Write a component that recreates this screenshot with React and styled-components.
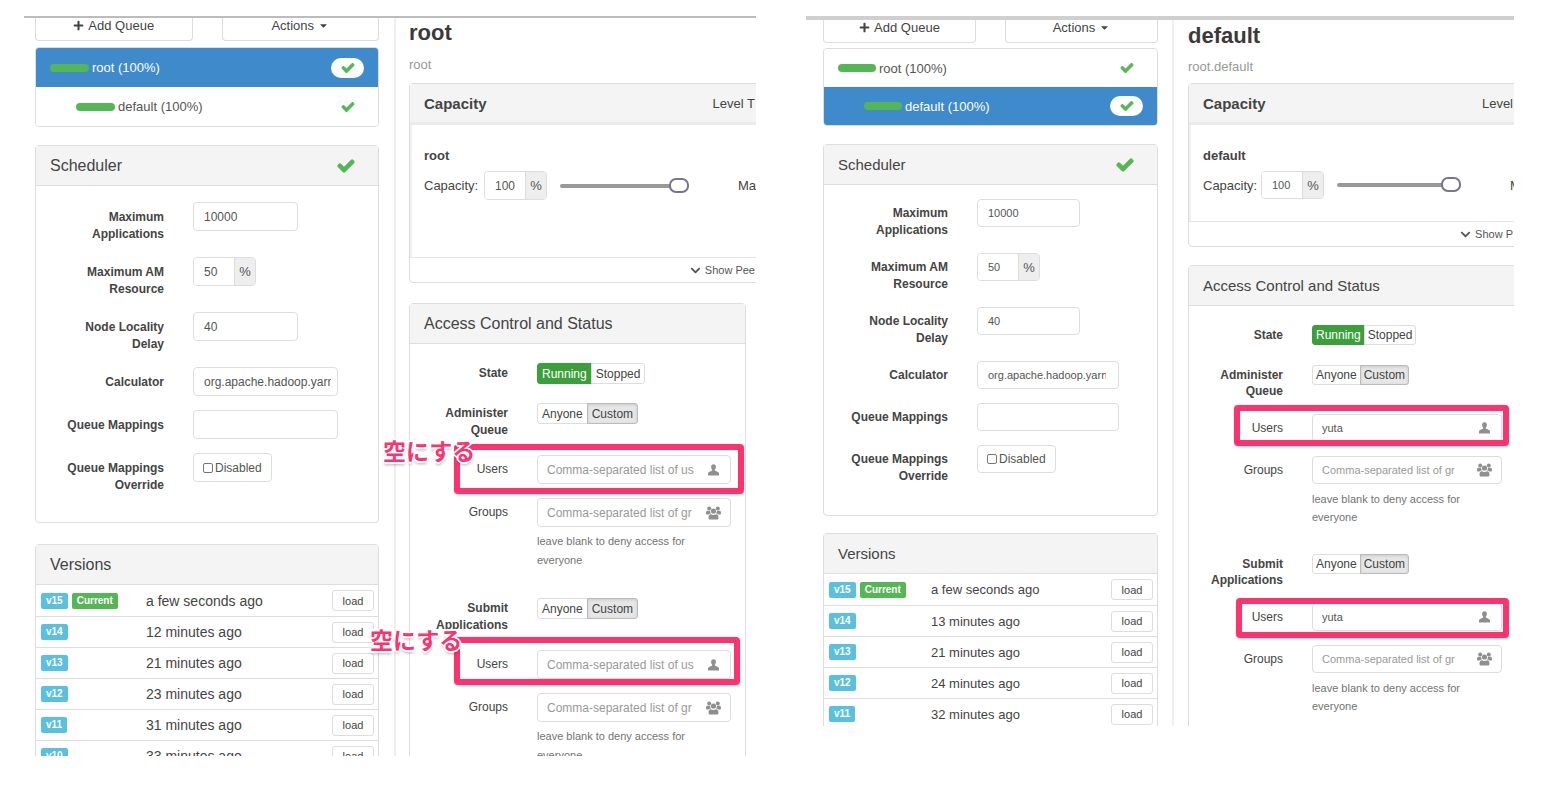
import React, { useId } from "react";
import styled, { ThemeProvider, createGlobalStyle, css } from "styled-components";
import { FaCheck, FaPlus, FaChevronDown, FaCaretDown } from "react-icons/fa";

const GlobalStyle = createGlobalStyle`
  *, *::before, *::after { box-sizing: border-box; }
  body {
    margin: 0;
    background: #fff;
    color: #444;
    font-family: "Liberation Sans", Arial, sans-serif;
    font-size: 13px;
  }
  button, input { font: inherit; color: inherit; margin: 0; }
`;

const color = {
  line: "#ddd",
  head: "#f4f4f4",
  blue: "#3f8acb",
  green: "#55b655",
  running: "#3b9f3b",
  info: "#5bc0de",
  pink: "#fb336f",
};

const roomy = {
  bar: 2, barColor: "#bcbcbc", cutoff: 68,
  columns: "minmax(0, 31fr) minmax(0, 30fr)",
  sideLeft: 11, sideRight: 15, mainLeft: 13,
  treeGap: 6, treeRow: 39, sectionGap: 18, swatch: 39,
  panelFont: 16, bodyTop: 16, formBottom: 28, field: 29,
  inputFont: 12, labelCol: 128, labelPad: 7, shortField: 105, longField: 145, longPad: 6,
  versionFont: 14, badgeCol: 110, versionsGap: 21,
  titleTop: 1, subTop: 9, subBottom: 9,
  capLabel: 60, capBottom: 57, sliderWidth: 129, accessGap: 20,
  accessMargin: 10, accessLabel: 98, accessLine: 17, accessPad: 2, helpLine: 19, helpTop: 5,
  toggle: 21, togglePad: 4,
};

const tight = {
  bar: 4, barColor: "#cfcfcf", cutoff: 98,
  columns: "minmax(0, 92fr) minmax(0, 85fr)",
  sideLeft: 17, sideRight: 14, mainLeft: 14,
  treeGap: 5, treeRow: 38, sectionGap: 18, swatch: 38,
  panelFont: 15, bodyTop: 14, formBottom: 30, field: 28,
  inputFont: 11, labelCol: 124, labelPad: 6, shortField: 103, longField: 142, longPad: 12,
  versionFont: 13, badgeCol: 107, versionsGap: 17,
  titleTop: 2, subTop: 8, subBottom: 7,
  capLabel: 58, capBottom: 22, sliderWidth: 124, accessGap: 18,
  accessMargin: -3, accessLabel: 94, accessLine: 16, accessPad: 1, helpLine: 18, helpTop: 6,
  toggle: 20, togglePad: 3,
};

const t = (key) => ({ theme }) => `${theme[key]}px`;

/* ---------- page frame ---------- */

const Page = styled.main`
  display: grid;
  grid-template-columns: minmax(0, 61fr) minmax(0, 59fr);
  column-gap: 50px;
  align-items: start;
  min-height: 100vh;
  padding: 16px 48px 0 24px;
`;

const Frame = styled.section`
  display: grid;
  grid-template-columns: ${({ theme }) => theme.columns};
  height: calc(100vh - ${t("cutoff")});
  overflow: hidden;
  border-top: ${t("bar")} solid ${({ theme }) => theme.barColor};
`;

const Sidebar = styled.aside`
  padding: 0 ${t("sideRight")} 0 ${t("sideLeft")};
  border-right: 2px solid #efefef;
`;

const Main = styled.div`
  padding-left: ${t("mainLeft")};
`;

/* ---------- shared panel ---------- */

const Panel = styled.section`
  border: 1px solid ${color.line};
  border-radius: 4px;
  background: #fff;
`;

const PanelHead = styled.header`
  display: flex;
  align-items: center;
  justify-content: space-between;
  height: 40px;
  padding: 0 24px 0 14px;
  border-bottom: 1px solid ${color.line};
  background: ${color.head};
`;

const PanelTitle = styled.h2`
  margin: 0;
  font-size: ${t("panelFont")};
  font-weight: 400;
`;

const CheckMark = styled(FaCheck)`
  color: ${color.green};
  font-size: ${({ $large }) => ($large ? 16 : 12)}px;
  stroke: currentColor;
  stroke-width: 44px;
  overflow: visible;
`;

/* ---------- queue tree ---------- */

const Actions = styled.div`
  display: grid;
  grid-template-columns: 1fr 1fr;
  column-gap: 29px;
`;

const ActionButton = styled.button`
  display: flex;
  align-items: center;
  justify-content: center;
  gap: 4px;
  height: 23px;
  padding: 0 0 7px;
  border: 1px solid ${color.line};
  border-top: 0;
  border-radius: 0 0 4px 4px;
  background: #fff;
  font-size: 13px;

  svg { font-size: 11px; }
`;

const Tree = styled.nav`
  display: flex;
  flex-direction: column;
  margin: ${t("treeGap")} 0 ${t("sectionGap")};
  border: 1px solid ${color.line};
  border-radius: 4px;
  overflow: hidden;
`;

const TreeLink = styled.a`
  display: flex;
  align-items: center;
  gap: 3px;
  height: ${t("treeRow")};
  padding: 0 14px 0 ${({ $depth }) => 14 + $depth * 26}px;
  background: ${({ $active }) => ($active ? color.blue : "#fff")};
  color: ${({ $active }) => ($active ? "#fff" : "#555")};
  font-size: 13px;
  text-decoration: none;
`;

const Swatch = styled.span`
  width: ${t("swatch")};
  height: 8px;
  border-radius: 4px;
  background: ${color.green};
`;

const Pill = styled.span`
  display: flex;
  align-items: center;
  justify-content: center;
  width: 33px;
  height: 20px;
  margin-left: auto;
  border-radius: 10px;
  background: #fff;
`;

/* ---------- scheduler form ---------- */

const SchedulerForm = styled.form`
  display: grid;
  row-gap: 14px;
  padding: ${t("bodyTop")} 0 ${t("formBottom")};
`;

const FormRow = styled.div`
  display: grid;
  grid-template-columns: ${t("labelCol")} minmax(0, 1fr);
  column-gap: 29px;
  align-items: start;
`;

const FormLabel = styled.label`
  padding: ${t("labelPad")} 0 0 24px;
  font-size: 12px;
  font-weight: 700;
  line-height: 17px;
  text-align: right;
  ${({ $single }) => $single && css`
    height: ${t("field")};
  `}
`;

const fieldBox = css`
  height: ${t("field")};
  border: 1px solid ${color.line};
  border-radius: 4px;
  background: #fff;
  color: #555;
`;

const TextField = styled.input`
  ${fieldBox}
  width: ${({ $long }) => ($long ? t("longField") : t("shortField"))};
  padding: 0 ${t("longPad")} 0 10px;
  font-size: ${t("inputFont")};
`;

const PercentBox = styled.span`
  ${fieldBox}
  display: flex;
  width: 63px;
  overflow: hidden;
`;

const PercentInput = styled.input`
  flex: 1;
  min-width: 0;
  padding: 0 0 0 10px;
  border: 0;
  background: #fff;
  font-size: ${t("inputFont")};
`;

const PercentSign = styled.span`
  display: flex;
  align-items: center;
  justify-content: center;
  width: 21px;
  border-left: 1px solid ${color.line};
  background: #eee;
`;

const CheckField = styled.label`
  ${fieldBox}
  display: flex;
  align-items: center;
  justify-self: start;
  gap: 2px;
  padding: 0 9px;
  font-size: 12px;
`;

const TickBox = styled.input`
  appearance: none;
  width: 10px;
  height: 10px;
  border: 1px solid #777;
  border-radius: 2px;
  background: #fff;
`;

/* ---------- versions ---------- */

const VersionsPanel = styled(Panel)`
  margin-top: ${t("versionsGap")};
`;

const VersionTable = styled.table`
  width: 100%;
  table-layout: fixed;
  border-collapse: separate;
  border-spacing: 0;
  font-size: ${t("versionFont")};

  td {
    height: 31px;
    padding: 0;
    white-space: nowrap;
  }
  tr + tr td { border-top: 1px solid ${color.line}; }
  td:first-child { width: ${t("badgeCol")}; padding-left: 5px; }
  td:last-child { width: 60px; padding-right: 4px; text-align: right; }
`;

const Badges = styled.div`
  display: flex;
  gap: 4px;
`;

const Badge = styled.span`
  height: 16px;
  padding: 0 5px;
  border-radius: 2px;
  background: ${({ $current }) => ($current ? color.green : color.info)};
  color: #fff;
  font-size: 10px;
  font-weight: 700;
  line-height: 16px;
`;

const LoadButton = styled.button`
  display: block;
  width: 42px;
  height: 21px;
  margin-left: auto;
  padding: 0;
  border: 1px solid ${color.line};
  border-radius: 3px;
  background: #fff;
  font-size: 11px;
`;

/* ---------- queue heading and capacity ---------- */

const QueueTitle = styled.h1`
  margin: 0;
  padding-top: ${t("titleTop")};
  color: #3a3a3a;
  font-size: 22px;
  font-weight: 700;
  line-height: 28px;
`;

const QueuePath = styled.p`
  margin: ${t("subTop")} 0 ${t("subBottom")};
  color: #999;
  font-size: 13px;
  line-height: 18px;
`;

const CapacityPanel = styled(Panel)`
  margin-right: -40px;
`;

const CapacityHead = styled(PanelHead)`
  height: 41px;
  padding-right: 40px;
  border-bottom: 3px solid #ebebeb;
  white-space: nowrap;
`;

const CapacityTitle = styled.h2`
  margin: 0;
  font-size: 15px;
  font-weight: 700;
`;

const CapacityBody = styled.div`
  padding: 22px 0 ${t("capBottom")} 12px;
  border-left: 2px solid #f0f0f0;
`;

const CapacityName = styled.h3`
  margin: 0 0 7px;
  font-size: 13px;
  line-height: 17px;
`;

const CapacityRow = styled.div`
  display: flex;
  align-items: center;
  white-space: nowrap;
`;

const CapacityLabel = styled.label`
  width: ${t("capLabel")};
`;

const Slider = styled.input`
  appearance: none;
  flex: none;
  width: ${t("sliderWidth")};
  height: 15px;
  margin: 0 49px 0 13px;
  background: transparent;

  &::-webkit-slider-runnable-track {
    height: 4px;
    border-radius: 2px;
    background: #999;
  }
  &::-webkit-slider-thumb {
    appearance: none;
    width: 20px;
    height: 15px;
    margin-top: -6px;
    border: 2px solid #77758c;
    border-radius: 7px;
    background: #fff;
  }
`;

const PeersButton = styled.button`
  display: flex;
  align-items: center;
  justify-content: flex-end;
  gap: 4px;
  width: 100%;
  height: 25px;
  padding: 0 40px 0 0;
  border: 0;
  border-top: 1px solid #e6e6e6;
  background: transparent;
  color: #555;
  font-size: 11px;
  white-space: nowrap;
`;

/* ---------- access control ---------- */

const AccessPanel = styled(Panel)`
  margin: ${t("accessGap")} ${t("accessMargin")} 0 0;
`;

const AccessForm = styled.form`
  display: grid;
  row-gap: 14px;
  padding: 19px 0;
`;

const AccessRow = styled.div`
  position: relative;
  display: grid;
  grid-template-columns: ${t("accessLabel")} minmax(0, 1fr);
  column-gap: 29px;
  align-items: start;
  min-height: 26px;
  padding-right: 14px;
`;

const ToggleLabel = styled.span`
  padding: 2px 0 ${t("accessPad")} 20px;
  font-size: 12px;
  font-weight: 700;
  line-height: ${t("accessLine")};
  text-align: right;
`;

const FieldLabel = styled.label`
  font-size: 12px;
  line-height: ${t("field")};
  text-align: right;
`;

const ToggleGroup = styled.div`
  display: flex;
`;

const Toggle = styled.button`
  height: ${t("toggle")};
  padding: 0 ${t("togglePad")};
  border: 1px solid ${color.line};
  background: #fff;
  font-size: 12px;
  line-height: 16px;

  &:first-child { border-radius: 3px 0 0 3px; }
  &:last-child { border-radius: 0 3px 3px 0; }
  & + & { margin-left: -1px; }

  ${({ $kind }) => $kind === "success" && css`
    border-color: ${color.running};
    background: ${color.running};
    color: #fff;
  `}
  ${({ $kind }) => $kind === "pressed" && css`
    border-color: #bbb;
    background: #e6e6e6;
    box-shadow: inset 0 1px 3px rgba(0, 0, 0, 0.12);
  `}
`;

const IconField = styled.span`
  ${fieldBox}
  display: flex;
  align-items: center;
  padding: 0 9px;

  svg {
    flex: none;
    fill: #8f8f8f;
  }
`;

const IconFieldInput = styled.input`
  flex: 1;
  min-width: 0;
  padding: 0;
  border: 0;
  background: transparent;
  font-size: ${t("inputFont")};

  &::placeholder { color: #999; opacity: 1; }
`;

const Help = styled.p`
  grid-column: 2;
  margin: ${t("helpTop")} 0 14px;
  padding-right: 30px;
  color: #737373;
  font-size: 11px;
  line-height: ${t("helpLine")};
`;

/* ---------- annotations laid over the panels ---------- */

const Ring = styled.div`
  position: absolute;
  inset: ${({ $inset }) => $inset};
  border: 6px solid ${color.pink};
  border-radius: 4px;
  box-shadow: 0 1px 2px rgba(0, 0, 0, 0.18);
  pointer-events: none;
`;

const Note = styled.span`
  position: absolute;
  left: ${({ $left }) => $left}px;
  top: ${({ $top }) => $top}px;
  color: ${color.pink};
  font-family: "Noto Sans CJK JP", sans-serif;
  font-size: 23px;
  font-weight: 700;
  line-height: 24px;
  white-space: nowrap;
  text-shadow: 2px 0 #fff, -2px 0 #fff, 0 2px #fff, 0 -2px #fff, 1px 1px #fff, -1px -1px #fff,
    1px -1px #fff, -1px 1px #fff, 0 3px 3px rgba(0, 0, 0, 0.3);
`;

/* ---------- composition ---------- */

function PersonIcon() {
  return (
    <svg width="15" height="12" viewBox="-2 0 15 12" aria-hidden="true">
      <path d="M5.5.3C7 .3 7.9 1.4 7.9 3c0 1.2-.5 2.1-1.1 2.7v.8l3.1 1.4c.7.3 1.1.8 1.1 1.6v1.9H0V9.500c0-.8.4-1.300 1.100-1.600l3.100-1.400v-.8C3.600 5.100 3.100 4.200 3.100 3 3.100 1.400 4 .3 5.500.3z" />
    </svg>
  );
}

function PeopleIcon() {
  return (
    <svg width="15" height="14" viewBox="0 0 15 14" aria-hidden="true">
      <circle cx="3.200" cy="2.500" r="2" />
      <circle cx="11.800" cy="2.500" r="2" />
      <circle cx="7.500" cy="5" r="2.600" />
      <path d="M1.300 4.800h2.600c.1 1.200.5 2 1.100 2.700-1 .1-1.800.5-2.400 1.100H1.300C.5 8.600 0 8.100 0 7.300c0-1.200.3-2.500 1.300-2.500z" />
      <path d="M13.700 4.800h-2.600c-.1 1.200-.5 2-1.100 2.700 1 .1 1.800.5 2.400 1.100h1.300c.8 0 1.300-.5 1.300-1.300 0-1.200-.3-2.500-1.300-2.500z" />
      <path d="M4.900 8.200c1.600 1 3.600 1 5.200 0 1.700.1 2.400 1.500 2.400 3.500 0 1.200-.7 1.900-1.900 1.900H4.400c-1.200 0-1.900-.7-1.900-1.900 0-2 .7-3.400 2.400-3.500z" />
    </svg>
  );
}

function PercentField({ id, value }) {
  return (
    <PercentBox>
      <PercentInput id={id} defaultValue={value} />
      <PercentSign>%</PercentSign>
    </PercentBox>
  );
}

function QueueTree({ selected }) {
  return (
    <Tree aria-label="Queues">
      {["root", "default"].map((name, depth) => (
        <TreeLink key={name} href={`#${name}`} $depth={depth} $active={name === selected}>
          <Swatch />
          {name} (100%)
          <Pill><CheckMark /></Pill>
        </TreeLink>
      ))}
    </Tree>
  );
}

function Scheduler() {
  const id = useId();
  return (
    <Panel>
      <PanelHead>
        <PanelTitle>Scheduler</PanelTitle>
        <CheckMark $large />
      </PanelHead>
      <SchedulerForm>
        <FormRow>
          <FormLabel htmlFor={`${id}max`}>Maximum Applications</FormLabel>
          <TextField id={`${id}max`} defaultValue="10000" />
        </FormRow>
        <FormRow>
          <FormLabel htmlFor={`${id}am`}>Maximum AM Resource</FormLabel>
          <PercentField id={`${id}am`} value="50" />
        </FormRow>
        <FormRow>
          <FormLabel htmlFor={`${id}node`}>Node Locality Delay</FormLabel>
          <TextField id={`${id}node`} defaultValue="40" />
        </FormRow>
        <FormRow>
          <FormLabel $single htmlFor={`${id}calc`}>Calculator</FormLabel>
          <TextField $long id={`${id}calc`} defaultValue="org.apache.hadoop.yarn" />
        </FormRow>
        <FormRow>
          <FormLabel $single htmlFor={`${id}map`}>Queue Mappings</FormLabel>
          <TextField $long id={`${id}map`} />
        </FormRow>
        <FormRow>
          <FormLabel htmlFor={`${id}over`}>Queue Mappings Override</FormLabel>
          <CheckField>
            <TickBox id={`${id}over`} type="checkbox" />
            Disabled
          </CheckField>
        </FormRow>
      </SchedulerForm>
    </Panel>
  );
}

function Versions({ items }) {
  return (
    <VersionsPanel>
      <PanelHead><PanelTitle>Versions</PanelTitle></PanelHead>
      <VersionTable>
        <tbody>
          {items.map(([name, when], index) => (
            <tr key={name}>
              <td>
                <Badges>
                  <Badge>{name}</Badge>
                  {index === 0 && <Badge $current>Current</Badge>}
                </Badges>
              </td>
              <td>{when}</td>
              <td><LoadButton type="button">load</LoadButton></td>
            </tr>
          ))}
        </tbody>
      </VersionTable>
    </VersionsPanel>
  );
}

function Capacity({ name, cut }) {
  const id = useId();
  return (
    <CapacityPanel>
      <CapacityHead>
        <CapacityTitle>Capacity</CapacityTitle>
        <span>{cut.level}</span>
      </CapacityHead>
      <CapacityBody>
        <CapacityName>{name}</CapacityName>
        <CapacityRow>
          <CapacityLabel htmlFor={id}>Capacity:</CapacityLabel>
          <PercentField id={id} value="100" />
          <Slider type="range" min="0" max="100" defaultValue="100" aria-label="Capacity" />
          <span>{cut.max}</span>
        </CapacityRow>
      </CapacityBody>
      <PeersButton type="button"><FaChevronDown />{cut.peers}</PeersButton>
    </CapacityPanel>
  );
}

function AccessGroup({ label, users, mark }) {
  const id = useId();
  return (
    <>
      <AccessRow>
        <ToggleLabel>{label}</ToggleLabel>
        <ToggleGroup>
          <Toggle type="button">Anyone</Toggle>
          <Toggle type="button" $kind="pressed">Custom</Toggle>
        </ToggleGroup>
      </AccessRow>
      <AccessRow>
        <FieldLabel htmlFor={`${id}u`}>Users</FieldLabel>
        <IconField>
          <IconFieldInput id={`${id}u`} defaultValue={users} placeholder="Comma-separated list of us" />
          <PersonIcon />
        </IconField>
        <Ring $inset={mark.ring} />
        {mark.note && <Note $left={mark.note[0]} $top={mark.note[1]}>空にする</Note>}
      </AccessRow>
      <AccessRow>
        <FieldLabel htmlFor={`${id}g`}>Groups</FieldLabel>
        <IconField>
          <IconFieldInput id={`${id}g`} placeholder="Comma-separated list of gr" />
          <PeopleIcon />
        </IconField>
        <Help>leave blank to deny access for everyone</Help>
      </AccessRow>
    </>
  );
}

function QueueManager({ size, queue, path, users, versions, cut, marks }) {
  return (
    <ThemeProvider theme={size}>
      <Frame>
        <Sidebar>
          <Actions>
            <ActionButton type="button"><FaPlus />Add Queue</ActionButton>
            <ActionButton type="button">Actions<FaCaretDown /></ActionButton>
          </Actions>
          <QueueTree selected={queue} />
          <Scheduler />
          <Versions items={versions} />
        </Sidebar>
        <Main>
          <QueueTitle>{queue}</QueueTitle>
          <QueuePath>{path}</QueuePath>
          <Capacity name={queue} cut={cut} />
          <AccessPanel>
            <PanelHead><PanelTitle>Access Control and Status</PanelTitle></PanelHead>
            <AccessForm>
              <AccessRow>
                <ToggleLabel>State</ToggleLabel>
                <ToggleGroup>
                  <Toggle type="button" $kind="success">Running</Toggle>
                  <Toggle type="button">Stopped</Toggle>
                </ToggleGroup>
              </AccessRow>
              <AccessGroup label="Administer Queue" users={users} mark={marks[0]} />
              <AccessGroup label="Submit Applications" users={users} mark={marks[1]} />
            </AccessForm>
          </AccessPanel>
        </Main>
      </Frame>
    </ThemeProvider>
  );
}

const rootVersions = [
  ["v15", "a few seconds ago"],
  ["v14", "12 minutes ago"],
  ["v13", "21 minutes ago"],
  ["v12", "23 minutes ago"],
  ["v11", "31 minutes ago"],
  ["v10", "33 minutes ago"],
];

const defaultVersions = [
  ["v15", "a few seconds ago"],
  ["v14", "13 minutes ago"],
  ["v13", "21 minutes ago"],
  ["v12", "24 minutes ago"],
  ["v11", "32 minutes ago"],
];

export default function App() {
  return (
    <>
      <GlobalStyle />
      <Page>
        <QueueManager
          size={roomy}
          queue="root"
          path="root"
          versions={rootVersions}
          cut={{ level: "Level T", max: "Ma", peers: "Show Pee" }}
          marks={[
            { ring: "-11px 1px -10px 44px", note: [-27, -17] },
            { ring: "-13px 5px -6px 44px", note: [-40, -23] },
          ]}
        />
        <QueueManager
          size={tight}
          queue="default"
          path="root.default"
          users="yuta"
          versions={defaultVersions}
          cut={{ level: "Level", max: "M", peers: "Show P" }}
          marks={[
            { ring: "-9px 7px -4px 45px" },
            { ring: "-5px 7px -7px 47px" },
          ]}
        />
      </Page>
    </>
  );
}
